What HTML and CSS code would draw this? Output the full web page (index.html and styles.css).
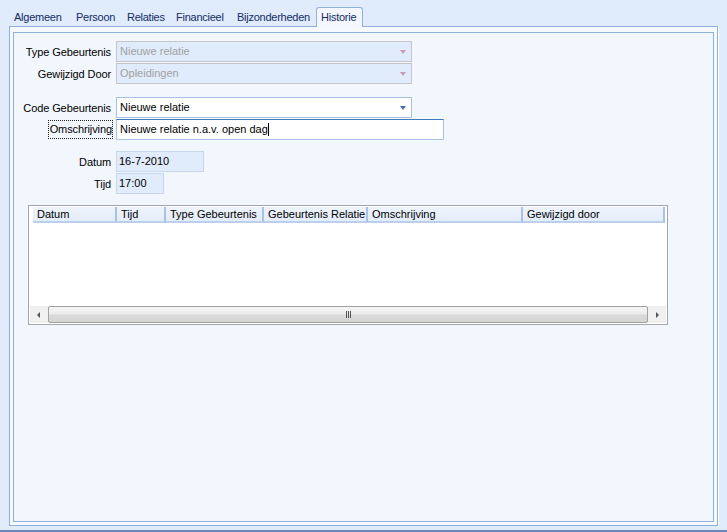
FILE: index.html
```html
<!DOCTYPE html>
<html>
<head>
<meta charset="utf-8">
<link rel="stylesheet" href="styles.css">
</head>
<body>
<div class="tabs">
  <div class="tab t1">Algemeen</div>
  <div class="tab t2">Persoon</div>
  <div class="tab t3">Relaties</div>
  <div class="tab t4">Financieel</div>
  <div class="tab t5">Bijzonderheden</div>
  <div class="tab active">Historie</div>
</div>
<div class="panel">
  <div class="inner">
    <div class="form">
      <div class="row">
        <div class="label">Type Gebeurtenis</div>
        <div class="combo disabled w-combo"><span>Nieuwe relatie</span><i class="arrow"></i></div>
      </div>
      <div class="row">
        <div class="label">Gewijzigd Door</div>
        <div class="combo disabled w-combo"><span>Opleidingen</span><i class="arrow"></i></div>
      </div>
      <div class="row sep">
        <div class="label">Code Gebeurtenis</div>
        <div class="combo w-combo"><span>Nieuwe relatie</span><i class="arrow"></i></div>
      </div>
      <div class="row">
        <div class="label"><span class="focus">Omschrijving</span></div>
        <div class="input focused w-omschr"><span>Nieuwe relatie n.a.v. open dag</span><i class="caret"></i></div>
      </div>
      <div class="row sep2">
        <div class="label">Datum</div>
        <div class="input ro w-datum"><span>16-7-2010</span></div>
      </div>
      <div class="row">
        <div class="label">Tijd</div>
        <div class="input ro w-tijd"><span>17:00</span></div>
      </div>
    </div>
    <div class="grid">
      <div class="header">
        <div class="hcell c1">Datum</div>
        <div class="hcell c2">Tijd</div>
        <div class="hcell c3">Type Gebeurtenis</div>
        <div class="hcell c4">Gebeurtenis Relatie</div>
        <div class="hcell c5">Omschrijving</div>
        <div class="hcell c6">Gewijzigd door</div>
      </div>
      <div class="gbody"></div>
      <div class="hscroll">
        <div class="sbtn"><i class="tri left"></i></div>
        <div class="track">
          <div class="thumb"><i class="grip"></i></div>
        </div>
        <div class="sbtn"><i class="tri right"></i></div>
      </div>
    </div>
  </div>
</div>
<div class="footer"></div>
</body>
</html>
```

FILE: styles.css
```css
* { box-sizing: border-box; }
html, body { margin: 0; padding: 0; }
body {
  width: 727px;
  height: 532px;
  overflow: hidden;
  background: #e0ebfb;
  font-family: "Liberation Sans", Arial, sans-serif;
  font-size: 11px;
  color: #000;
}
.tabs {
  display: flex;
  align-items: flex-end;
  height: 26px;
  padding-left: 8px;
}
.tab {
  height: 19px;
  line-height: 20px;
  padding: 0 0 0 6px;
  color: #122c68;
  white-space: nowrap;
  letter-spacing: -0.25px;
}
.t1 { width: 62px; }
.t2 { width: 51px; }
.t3 { width: 49px; }
.t4 { width: 61px; }
.t5 { width: 85px; }
.tab.active {
  position: relative;
  z-index: 2;
  width: 47px;
  height: 20px;
  margin-bottom: -1px;
  padding: 0 0 1px 4px;
  line-height: 18px;
  background: #f4f8fe;
  border: 1px solid #8fb2e0;
  border-bottom: none;
  border-radius: 3px 3px 0 0;
}
.panel {
  position: relative;
  z-index: 1;
  margin: 0 9px 0 9px;
  width: 709px;
  height: 500px;
  border: 1px solid #8fb0dc;
  background: #f6f9fe;
  padding: 5px 3px 3px 3px;
  box-shadow: 1px 0 0 #ffffff;
}
.inner {
  height: 100%;
  border: 1px solid #8fb0dc;
  background: #f2f6fd;
  padding: 8px 0 0 14px;
  display: flex;
  flex-direction: column;
}
.form {
  display: flex;
  flex-direction: column;
  gap: 1px;
}
.row {
  display: grid;
  grid-template-columns: 97px auto;
  column-gap: 5px;
  align-items: center;
  margin-left: -14px;
  height: 21px;
}
.row.sep { margin-top: 12px; }
.row.sep2 { margin-top: 10px; }
.label {
  text-align: right;
  white-space: nowrap;
  letter-spacing: -0.1px;
}
.focus {
  display: inline-block;
  border: 1px dotted #222;
  padding: 1px 0 1px 1px;
  margin-right: -2px;
  line-height: 15px;
}
.combo, .input {
  position: relative;
  height: 21px;
  line-height: 19px;
  padding-left: 3px;
  white-space: nowrap;
}
.combo { border: 1px solid #a8c0e2; background: #fff; }
.combo.disabled {
  border-color: #c3c5c9;
  background: #e0ebfb;
  color: #a2a2a2;
}
.arrow {
  position: absolute;
  right: 5px;
  top: 8px;
  width: 0;
  height: 0;
  border-left: 3px solid transparent;
  border-right: 3px solid transparent;
  border-top: 4px solid #4a6db0;
}
.combo.disabled .arrow { border-top-color: #c89ab8; }
.input { border: 1px solid #a8c0e2; background: #fff; }
.input.focused { border-top-color: #3e7bb8; }
.input.ro { border-color: #c8d7ec; background: #e0ebfb; padding-left: 2px; }
.caret {
  display: inline-block;
  width: 1px;
  height: 13px;
  background: #000;
  vertical-align: -3px;
}
.w-combo { width: 296px; }
.w-omschr { width: 328px; }
.w-datum { width: 88px; }
.w-tijd { width: 48px; }
.grid {
  margin-top: 11px;
  width: 640px;
  height: 120px;
  border: 1px solid #a3a6ab;
  background: #fff;
  display: flex;
  flex-direction: column;
  padding: 1px 1px 1px 1px;
}
.header {
  display: flex;
  height: 16px;
  padding-left: 3px;
}
.hcell {
  height: 16px;
  line-height: 14px;
  padding-left: 4px;
  background: linear-gradient(#eef3fc, #e3ecf9);
  border-right: 2px solid #a9c1e2;
  border-bottom: 2px solid #bccfeb;
  white-space: nowrap;
  overflow: hidden;
}
.c1 { width: 84px; }
.c2 { width: 49px; }
.c3 { width: 98px; }
.c4 { width: 104px; }
.c5 { width: 155px; }
.c6 { width: 142px; }
.gbody { flex: 1; }
.hscroll {
  display: flex;
  height: 17px;
  background: #f0f0f0;
}
.sbtn {
  width: 17px;
  display: flex;
  align-items: center;
  justify-content: center;
}
.tri {
  width: 0;
  height: 0;
  border-top: 3px solid transparent;
  border-bottom: 3px solid transparent;
}
.tri.left { border-right: 3px solid #555; }
.tri.right { border-left: 3px solid #555; }
.track {
  flex: 1;
  padding: 0 1px;
}
.thumb {
  height: 17px;
  border: 1px solid #a1a1a1;
  border-radius: 2px;
  background: linear-gradient(#f5f5f5 0%, #ececec 45%, #dadada 55%, #d4d4d4 100%);
  display: flex;
  align-items: center;
  justify-content: center;
}
.grip {
  display: block;
  width: 5px;
  height: 7px;
  border-left: 1px solid #555;
  border-right: 1px solid #555;
  position: relative;
}
.grip::after {
  content: "";
  position: absolute;
  left: 1px;
  top: 0;
  width: 1px;
  height: 7px;
  background: #555;
}
.footer {
  height: 6px;
  border-bottom: 2px solid #6a88b8;
}
```
